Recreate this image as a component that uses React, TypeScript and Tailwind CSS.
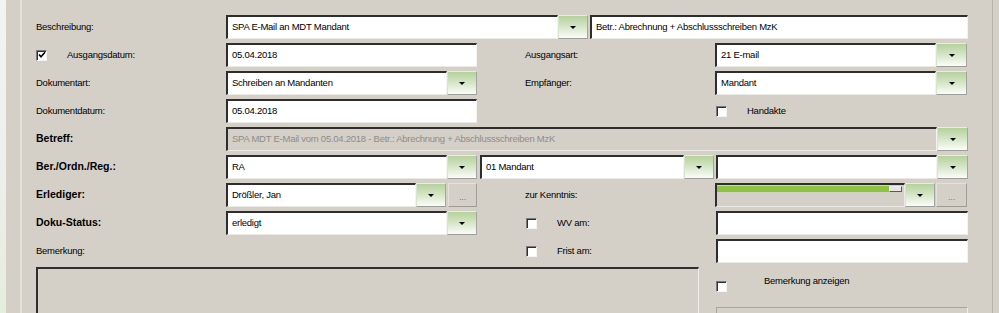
import type { ReactNode } from 'react';

function Field({ w, children, disabled }: { w: string; children?: ReactNode; disabled?: boolean }) {
  return (
    <div
      className={`${w} h-[24px] shrink-0 flex items-center pl-[4px] whitespace-nowrap overflow-hidden border-t-2 border-l-2 border-t-[#2e2e2e] border-l-[#2e2e2e] border-b border-r border-b-[#ebe9e4] border-r-[#f4f3ef] ${
        disabled ? 'bg-[#d4d0c8] text-[#8e8c88]' : 'bg-white text-black'
      }`}
    >
      {children}
    </div>
  );
}

function DropBtn({ w = 'w-[30px]' }: { w?: string }) {
  return (
    <div
      className={`${w} h-[24px] shrink-0 flex items-center justify-center bg-linear-to-b from-[#b5d19c] via-[#d6e6c8] to-[#fbfdf9] border border-t-[#e6eee0] border-l-[#d9e4cf] border-b-[#9c9c98] border-r-[#a4a4a0]`}
    >
      <div className="w-0 h-0 border-l-[3px] border-r-[3px] border-t-[3px] border-l-transparent border-r-transparent border-t-black" />
    </div>
  );
}

function DotsBtn({ w = 'w-[29px]' }: { w?: string }) {
  return (
    <div
      className={`${w} h-[24px] shrink-0 flex items-end justify-center pb-[5px] bg-[#d4d0c8] border border-t-[#e4e1da] border-l-[#e4e1da] border-b-[#9e9a94] border-r-[#a29e98] text-[#7c7a76] leading-none`}
    >
      ...
    </div>
  );
}

function Check({ checked }: { checked?: boolean }) {
  return (
    <div className="w-[11px] h-[11px] shrink-0 bg-white border-t border-l border-t-[#7a7a7a] border-l-[#7a7a7a] border-b border-r border-b-[#f4f3ef] border-r-[#f4f3ef] shadow-[inset_1px_1px_0_#303030] flex items-center justify-center">
      {checked && (
        <svg width="8" height="8" viewBox="0 0 8 8">
          <polyline points="1,3.5 3,5.8 7,1.2" fill="none" stroke="black" strokeWidth="1.6" />
        </svg>
      )}
    </div>
  );
}

function Label({ children, bold }: { children: ReactNode; bold?: boolean }) {
  return (
    <div
      className={`w-[190px] shrink-0 whitespace-nowrap ${
        bold ? 'font-bold text-[10.5px] tracking-normal' : ''
      }`}
    >
      {children}
    </div>
  );
}

const row = 'flex items-center h-[24px]';

export default function App() {
  return (
    <div className="w-[999px] h-[313px] overflow-hidden flex bg-[#d4d0c8] text-black text-[9.5px] tracking-[-0.25px] font-['Liberation_Sans',Arial,sans-serif]">
      <div className="w-[6px] shrink-0 bg-linear-to-b from-[#f3f3f1] via-[#efefec] to-[#e4eedc]" />
      <div className="w-[14px] shrink-0" />
      <div className="w-[972px] shrink-0 border-l-2 border-l-[#e4e1db] pl-[14px] pt-[15px] flex flex-col gap-[4px]">
        {/* Beschreibung */}
        <div className={row}>
          <Label>Beschreibung:</Label>
          <Field w="w-[332px]">SPA E-Mail an MDT Mandant</Field>
          <DropBtn />
          <div className="w-[2px]" />
          <Field w="w-[378px]">Betr.: Abrechnung + Abschlussschreiben MzK</Field>
        </div>

        {/* Ausgangsdatum */}
        <div className={row}>
          <div className="w-[190px] shrink-0 flex items-center">
            <Check checked />
            <span className="ml-[20px]">Ausgangsdatum:</span>
          </div>
          <Field w="w-[251px]">05.04.2018</Field>
          <div className="w-[48px] shrink-0" />
          <Label>Ausgangsart:</Label>
          <Field w="w-[221px]">21 E-mail</Field>
          <DropBtn w="w-[31px]" />
        </div>

        {/* Dokumentart */}
        <div className={row}>
          <Label>Dokumentart:</Label>
          <Field w="w-[221px]">Schreiben an Mandanten</Field>
          <DropBtn />
          <div className="w-[48px] shrink-0" />
          <Label>Empfänger:</Label>
          <Field w="w-[221px]">Mandant</Field>
          <DropBtn w="w-[31px]" />
        </div>

        {/* Dokumentdatum */}
        <div className={row}>
          <Label>Dokumentdatum:</Label>
          <Field w="w-[251px]">05.04.2018</Field>
          <div className="w-[239px] shrink-0" />
          <Check />
          <span className="ml-[20px]">Handakte</span>
        </div>

        {/* Betreff */}
        <div className={row}>
          <Label bold>Betreff:</Label>
          <Field w="w-[711px]" disabled>
            SPA MDT E-Mail vom 05.04.2018 - Betr.: Abrechnung + Abschlussschreiben MzK
          </Field>
          <DropBtn w="w-[31px]" />
        </div>

        {/* Ber./Ordn./Reg. */}
        <div className={row}>
          <Label bold>Ber./Ordn./Reg.:</Label>
          <Field w="w-[221px]">RA</Field>
          <DropBtn />
          <div className="w-[3px]" />
          <Field w="w-[204px]">01 Mandant</Field>
          <DropBtn />
          <div className="w-[2px]" />
          <Field w="w-[221px]" />
          <DropBtn w="w-[31px]" />
        </div>

        {/* Erlediger */}
        <div className={row}>
          <Label bold>Erlediger:</Label>
          <Field w="w-[190px]">Drößler, Jan</Field>
          <DropBtn />
          <div className="w-[2px]" />
          <DotsBtn />
          <div className="w-[48px] shrink-0" />
          <Label>zur Kenntnis:</Label>
          <div className="w-[190px] h-[24px] shrink-0 bg-[#d4d0c8] border-t-2 border-l-2 border-t-[#2e2e2e] border-l-[#2e2e2e] border-b border-r border-b-[#ebe9e4] border-r-[#ebe9e4]">
            <div className="flex h-[6px] mt-[1px]">
              <div className="flex-1 bg-[#8cc43f]" />
              <div className="w-[13px] bg-[#e8e6e2] border border-[#5a5a5a] border-t-[#f0f0f0] border-l-[#f0f0f0]" />
              <div className="w-[2px]" />
            </div>
          </div>
          <DropBtn />
          <div className="w-[1px]" />
          <DotsBtn w="w-[31px]" />
        </div>

        {/* Doku-Status */}
        <div className={row}>
          <Label bold>Doku-Status:</Label>
          <Field w="w-[221px]">erledigt</Field>
          <DropBtn />
          <div className="w-[49px] shrink-0" />
          <div className="w-[190px] shrink-0 flex items-center">
            <Check />
            <span className="ml-[20px]">WV am:</span>
          </div>
          <Field w="w-[252px]" />
        </div>

        {/* Bemerkung */}
        <div className={row}>
          <Label>Bemerkung:</Label>
          <div className="w-[300px] shrink-0" />
          <div className="w-[190px] shrink-0 flex items-center">
            <Check />
            <span className="ml-[20px]">Frist am:</span>
          </div>
          <Field w="w-[252px]" />
        </div>

        {/* Bemerkung text + options */}
        <div className="flex items-start">
          <div className="w-[663px] h-[60px] shrink-0 bg-[#d4d0c8] border-t-2 border-l-2 border-t-[#2e2e2e] border-l-[#2e2e2e] border-r border-r-[#f0eee9]" />
          <div className="w-[17px] shrink-0" />
          <div className="w-[252px] shrink-0 flex flex-col">
            <div className="flex items-center mt-[9px] h-[14px]">
              <div className="mt-[6px]">
                <Check />
              </div>
              <span className="ml-[37px] -mt-[4px]">Bemerkung anzeigen</span>
            </div>
            <div className="mt-[17px] h-[20px] border-t border-l border-t-[#a8a49e] border-l-[#a8a49e] border-r border-r-[#f0eee9]" />
          </div>
        </div>
      </div>
      <div className="flex-1 border-l border-l-[#b7b3ab] bg-[#d4d0c8]" />
    </div>
  );
}
